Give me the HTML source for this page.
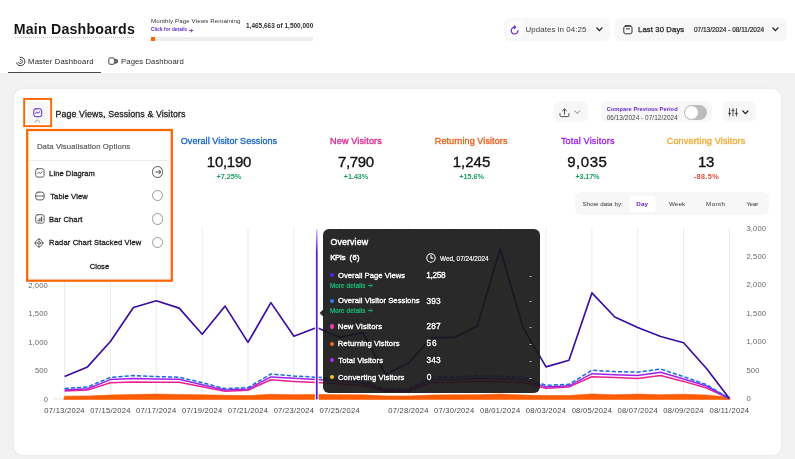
<!DOCTYPE html><html lang="en"><head><meta charset="utf-8"><title>Main Dashboards</title><style>
*{box-sizing:border-box;margin:0;padding:0}
html,body{width:795px;height:459px;overflow:hidden;background:#f2f2f2;font-family:"Liberation Sans", sans-serif;}
.a{position:absolute}
.t{position:absolute;white-space:nowrap;line-height:20px;height:20px}
.pill{position:absolute;background:#f7f7f7;border-radius:6px}
svg{position:absolute;overflow:visible}
#root{position:absolute;left:0;top:0;width:795px;height:459px;will-change:transform}
</style></head><body><div id="root">
<div class="a" style="left:0;top:0;width:795px;height:73px;background:#fff"></div>
<div class="a" style="left:14.7px;top:37.2px;width:119.5px;height:0;border-top:1px dotted #c4c4c4"></div>
<div class="a" style="left:151.4px;top:37.2px;width:161.6px;height:3.8px;background:#eee"></div>
<div class="a" style="left:151.4px;top:37.2px;width:3.8px;height:3.8px;background:#ff6600"></div>
<div class="a" style="left:8px;top:71.6px;width:92.6px;height:1.2px;background:#4a4a4a"></div>
<svg style="left:15px;top:56px" width="11" height="11" viewBox="0 0 11 11" fill="none" stroke="#2a2a2a" stroke-width="0.95" stroke-linecap="round"><path d="M5.0 1.3 A4.2 4.2 0 1 1 1.6 6.9"/><path d="M5.4 3.4 A2.1 2.1 0 1 1 3.6 6.6"/><circle cx="5.5" cy="5.5" r="0.45" fill="#2a2a2a" stroke="none"/></svg>
<svg style="left:108px;top:57.4px" width="11" height="9" viewBox="0 0 11 9" fill="none" stroke="#3a3a3a" stroke-width="0.95" stroke-linejoin="round"><rect x="0.8" y="0.9" width="5.6" height="6.4" rx="1.3"/><path d="M6.6 2.4 H8.4 Q9.4 2.4 9.4 3.3 V5.1 Q9.4 6 8.4 6 H6.6" fill="#777"/></svg>
<div class="pill" style="left:503.8px;top:18px;width:106.4px;height:22.8px"></div>
<div class="a" style="left:506.8px;top:20.6px;width:16px;height:17.6px;background:#fcfcfc;border-radius:4px"></div>
<svg style="left:510.4px;top:24.6px" width="10" height="11" viewBox="0 0 10 11" fill="none" stroke="#5a1fd1" stroke-width="1.1" stroke-linecap="round" stroke-linejoin="round"><path d="M8.0 5.6 A3.4 3.4 0 1 1 5.1 2.2"/><path d="M4.2 0.9 L5.6 2.2 L4.2 3.5"/></svg>
<svg style="left:596px;top:26.6px" width="7" height="5" viewBox="0 0 7 5" fill="none" stroke="#1a1a1a" stroke-width="1.3" stroke-linecap="round" stroke-linejoin="round"><path d="M0.8 0.9 L3.4 3.6 L6 0.9"/></svg>
<div class="pill" style="left:615.2px;top:18px;width:171.6px;height:22.8px"></div>
<svg style="left:623px;top:25.4px" width="10" height="10" viewBox="0 0 10 10" fill="none" stroke="#333" stroke-width="1" stroke-linecap="round"><rect x="0.8" y="1" width="8.2" height="7.8" rx="1.8"/><path d="M3.3 3.9 H6.5"/><path d="M2.6 0.9 H7.2" stroke-width="1.4"/></svg>
<svg style="left:772px;top:27px" width="7" height="5" viewBox="0 0 7 5" fill="none" stroke="#1a1a1a" stroke-width="1.3" stroke-linecap="round" stroke-linejoin="round"><path d="M0.8 0.9 L3.4 3.6 L6 0.9"/></svg>
<div class="a" style="left:14px;top:88.5px;width:767px;height:366.5px;background:#fff;border-radius:9px;box-shadow:0 0 4px rgba(0,0,0,0.05)"></div>
<div class="a" style="left:55.5px;top:117.4px;width:129.5px;height:0;border-top:1px dotted #bdbdbd"></div>
<div class="pill" style="left:553.5px;top:101.4px;width:34px;height:21px"></div>
<svg style="left:558.6px;top:108px" width="11" height="10" viewBox="0 0 11 10" fill="none" stroke="#4a4a4a" stroke-width="1" stroke-linecap="round" stroke-linejoin="round"><path d="M1 5.6 V7.4 Q1 8.6 2.2 8.6 H8.8 Q10 8.6 10 7.4 V5.6"/><path d="M5.5 6.2 V1"/><path d="M3.4 2.9 L5.5 0.9 L7.6 2.9"/></svg>
<svg style="left:574px;top:110.2px" width="7" height="5" viewBox="0 0 7 5" fill="none" stroke="#777" stroke-width="0.9" stroke-linecap="round" stroke-linejoin="round"><path d="M0.6 0.8 L3.3 3.5 L6 0.8"/></svg>
<div class="pill" style="left:601px;top:101.4px;width:111px;height:21px"></div>
<div class="a" style="left:684px;top:105px;width:23.4px;height:15px;border-radius:7.5px;background:#bcbcbc"></div>
<div class="a" style="left:685px;top:106px;width:13px;height:13px;border-radius:50%;background:#fff"></div>
<div class="pill" style="left:722.8px;top:101.4px;width:32.8px;height:21px"></div>
<svg style="left:727.6px;top:108px" width="10" height="9" viewBox="0 0 10 9" fill="none" stroke="#2a2a2a" stroke-width="0.85" stroke-linecap="round"><path d="M1.6 0.6 V8"/><path d="M5 0.6 V8"/><path d="M8.4 0.6 V8"/><path d="M0.5 5.4 H2.7"/><path d="M3.9 2.6 H6.1"/><path d="M7.3 5.4 H9.5"/></svg>
<svg style="left:742.3px;top:109.8px" width="7" height="5" viewBox="0 0 7 5" fill="none" stroke="#1a1a1a" stroke-width="1.3" stroke-linecap="round" stroke-linejoin="round"><path d="M0.8 0.9 L3.4 3.6 L6 0.9"/></svg>
<div class="pill" style="left:575.3px;top:192.4px;width:194.1px;height:23px;border-radius:7px"></div>
<div class="a" style="left:628.6px;top:195.6px;width:27.2px;height:16.6px;background:#fff;border-radius:5px"></div>
<svg style="left:0;top:0" width="795" height="459" viewBox="0 0 795 459" fill="none">
<line x1="64.6" y1="228" x2="64.6" y2="400" stroke="#ebebeb" stroke-width="1"/>
<line x1="110.4" y1="228" x2="110.4" y2="400" stroke="#ebebeb" stroke-width="1"/>
<line x1="156.3" y1="228" x2="156.3" y2="400" stroke="#ebebeb" stroke-width="1"/>
<line x1="202.2" y1="228" x2="202.2" y2="400" stroke="#ebebeb" stroke-width="1"/>
<line x1="248.0" y1="228" x2="248.0" y2="400" stroke="#ebebeb" stroke-width="1"/>
<line x1="293.9" y1="228" x2="293.9" y2="400" stroke="#ebebeb" stroke-width="1"/>
<line x1="339.7" y1="228" x2="339.7" y2="400" stroke="#ebebeb" stroke-width="1"/>
<line x1="408.5" y1="228" x2="408.5" y2="400" stroke="#ebebeb" stroke-width="1"/>
<line x1="454.3" y1="228" x2="454.3" y2="400" stroke="#ebebeb" stroke-width="1"/>
<line x1="500.2" y1="228" x2="500.2" y2="400" stroke="#ebebeb" stroke-width="1"/>
<line x1="546.0" y1="228" x2="546.0" y2="400" stroke="#ebebeb" stroke-width="1"/>
<line x1="591.9" y1="228" x2="591.9" y2="400" stroke="#ebebeb" stroke-width="1"/>
<line x1="637.7" y1="228" x2="637.7" y2="400" stroke="#ebebeb" stroke-width="1"/>
<line x1="683.6" y1="228" x2="683.6" y2="400" stroke="#ebebeb" stroke-width="1"/>
<line x1="729.4" y1="228" x2="729.4" y2="400" stroke="#ebebeb" stroke-width="1"/>
<line x1="385.5" y1="228" x2="385.5" y2="400" stroke="#ebebeb" stroke-width="1"/>
<line x1="53" y1="399" x2="729.4" y2="399" stroke="#e4e4e4" stroke-width="1"/>
<polygon points="63.8,399.4 64.6,396.18 87.5,396.01 110.4,395.04 133.4,394.48 156.3,394.08 179.2,394.48 202.2,394.87 225.1,395.33 248.0,395.61 270.9,394.31 293.9,394.65 316.8,394.42 339.7,394.76 362.6,394.87 385.5,395.90 408.5,395.90 431.4,395.04 454.3,394.87 477.2,394.76 500.2,394.08 523.1,395.04 546.0,395.61 569.0,395.44 591.9,393.91 614.8,394.76 637.7,394.08 660.7,394.65 683.6,394.19 706.5,395.04 729.4,397.26 730.2,399.4" fill="#fd5c02" stroke="#fd5c02" stroke-width="0.6" stroke-linejoin="round"/>
<polyline points="64.6,390.9 87.5,390.1 110.4,382.7 133.4,381.9 156.3,382.2 179.2,382.3 202.2,386.8 225.1,391.3 248.0,390.2 270.9,379.7 293.9,381.4 316.8,382.6 339.7,383.8 362.6,385.6 385.5,391.4 408.5,391.4 431.4,382.4 454.3,382.2 477.2,381.2 500.2,381.6 523.1,382.4 546.0,388.2 569.0,386.9 591.9,376.7 614.8,377.6 637.7,378.6 660.7,375.6 683.6,381.4 706.5,388.0 729.4,398.5" stroke="#ec1f8f" stroke-width="1.5" stroke-linejoin="round"/>
<polyline points="64.6,389.9 87.5,388.8 110.4,379.6 133.4,378.4 156.3,378.9 179.2,379.3 202.2,384.8 225.1,390.0 248.0,389.0 270.9,376.9 293.9,378.2 316.8,379.4 339.7,380.8 362.6,383.0 385.5,390.2 408.5,390.2 431.4,379.6 454.3,379.4 477.2,378.2 500.2,378.8 523.1,379.6 546.0,386.9 569.0,385.8 591.9,373.7 614.8,374.8 637.7,375.6 660.7,372.2 683.6,379.0 706.5,386.0 729.4,398.5" stroke="#a020f0" stroke-width="1.5" stroke-linejoin="round"/>
<polyline points="64.6,388.5 87.5,387.0 110.4,377.4 133.4,375.6 156.3,376.6 179.2,377.2 202.2,382.7 225.1,388.6 248.0,387.6 270.9,374.0 293.9,376.0 316.8,377.2 339.7,378.6 362.6,381.0 385.5,388.8 408.5,388.8 431.4,377.2 454.3,377.0 477.2,375.6 500.2,376.2 523.1,377.2 546.0,385.4 569.0,384.3 591.9,370.3 614.8,371.6 637.7,372.2 660.7,369.0 683.6,376.7 706.5,384.6 729.4,398.5" stroke="#1a6ae0" stroke-width="1.5" stroke-dasharray="4.2 2" stroke-linejoin="round"/>
<polyline points="64.6,376.5 87.5,366.9 110.4,341.5 133.4,307.5 156.3,300.8 179.2,308.1 202.2,334.3 225.1,306.1 248.0,342.4 270.9,302.6 293.9,336.3 316.8,327.4 339.7,337.4 362.6,332.5 385.5,374.5 408.5,363.3 431.4,337.6 454.3,337.4 477.2,326.2 500.2,248.6 523.1,327.7 546.0,366.9 569.0,360.2 591.9,292.9 614.8,317.0 637.7,327.5 660.7,336.5 683.6,342.7 706.5,368.5 729.4,398.5" stroke="#3a0ca3" stroke-width="1.65" stroke-linejoin="round"/>
<defs><linearGradient id="hg" gradientUnits="userSpaceOnUse" x1="0" y1="229" x2="0" y2="252"><stop offset="0" stop-color="#6a1fe0" stop-opacity="0.25"/><stop offset="1" stop-color="#5a14d8" stop-opacity="1"/></linearGradient><linearGradient id="hw" gradientUnits="userSpaceOnUse" x1="0" y1="229" x2="0" y2="252"><stop offset="0" stop-color="#fff" stop-opacity="0.2"/><stop offset="1" stop-color="#fff" stop-opacity="1"/></linearGradient></defs>
<rect x="314.9" y="229" width="3.8" height="171" fill="url(#hw)"/>
<rect x="315.92" y="229.4" width="1.7" height="170" fill="url(#hg)"/>
</svg>
<div class="a" style="left:322.6px;top:228.6px;width:217.2px;height:164.2px;background:rgba(23,23,23,0.92);border-radius:6px"></div>
<svg style="left:318.6px;top:309px" width="5" height="8" viewBox="0 0 5 8"><path d="M4.2 0.4 L0.6 4 L4.2 7.6 Z" fill="rgba(23,23,23,0.92)"/></svg>
<svg style="left:426px;top:252.9px" width="10" height="10" viewBox="0 0 10 10" fill="none" stroke="#fff" stroke-width="1.05" stroke-linecap="round" stroke-linejoin="round"><circle cx="5" cy="5" r="4.2"/><path d="M5 2.6 V5.1 H6.9"/></svg>
<div class="a" style="left:330.3px;top:273.1px;width:4.2px;height:4.2px;border-radius:50%;background:#5b21e0"></div>
<div class="a" style="left:330.3px;top:298.9px;width:4.2px;height:4.2px;border-radius:50%;background:#2f7df0"></div>
<div class="a" style="left:330.3px;top:324.4px;width:4.2px;height:4.2px;border-radius:50%;background:#f03aa8"></div>
<div class="a" style="left:330.3px;top:341.6px;width:4.2px;height:4.2px;border-radius:50%;background:#f4701c"></div>
<div class="a" style="left:330.3px;top:358.1px;width:4.2px;height:4.2px;border-radius:50%;background:#b026f5"></div>
<div class="a" style="left:330.3px;top:375.3px;width:4.2px;height:4.2px;border-radius:50%;background:#f8c533"></div>
<div class="a" style="left:27.6px;top:102px;width:21.6px;height:22px;background:#f7f7f7;border-radius:4px"></div>
<svg style="left:33px;top:108px" width="10" height="10" viewBox="0 0 10 10" fill="none" stroke="#5a1fd1" stroke-width="1.0" stroke-linecap="round" stroke-linejoin="round"><rect x="0.8" y="0.8" width="7.9" height="7.9" rx="2"/><path d="M2.5 5.3 L3.7 4.2 L5.1 5.2 L7.0 3.5"/></svg>
<svg style="left:34.4px;top:118.8px" width="7" height="4" viewBox="0 0 7 4" fill="none" stroke="#8a8a8a" stroke-width="0.8" stroke-linecap="round" stroke-linejoin="round"><path d="M0.6 3.2 L3.3 0.7 L6 3.2"/></svg>
<svg style="left:0;top:0" width="200" height="300" viewBox="0 0 200 300" fill="none" stroke="#ff6600"><rect x="24.15" y="98.95" width="27.0" height="27.2" stroke-width="1.9"/></svg>
<svg style="left:0;top:0" width="200" height="300" viewBox="0 0 200 300" fill="#fff" stroke="#ff6600"><rect x="27.2" y="130.0" width="144.6" height="150.7" stroke-width="2.25"/></svg>
<div class="a" style="left:29px;top:159.6px;width:140px;height:1px;background:#ececec"></div>
<svg style="left:34.6px;top:167.6px" width="10" height="10" viewBox="0 0 10 10" fill="none" stroke="#444" stroke-width="0.85" stroke-linecap="round" stroke-linejoin="round"><rect x="0.7" y="0.7" width="8.4" height="8.4" rx="1.9"/><path d="M2.6 5.5 L3.8 4.4 L5.3 5.4 L7.2 3.7"/></svg>
<svg style="left:34.6px;top:190.8px" width="10" height="10" viewBox="0 0 10 10" fill="none" stroke="#444" stroke-width="0.85" stroke-linecap="round" stroke-linejoin="round"><rect x="0.7" y="1.1" width="8.4" height="7.8" rx="2.6"/><path d="M0.8 5 H9"/></svg>
<svg style="left:34.6px;top:214.4px" width="10" height="10" viewBox="0 0 10 10" fill="none" stroke="#444" stroke-width="0.85" stroke-linecap="round" stroke-linejoin="round"><rect x="0.7" y="0.7" width="8.4" height="8.4" rx="1.9"/><path d="M3.2 6.9 V6.0 M4.9 6.9 V4.6 M6.6 6.9 V3.0" stroke-width="1.1"/></svg>
<svg style="left:34.4px;top:237.6px" width="10" height="10" viewBox="0 0 10 10" fill="none" stroke="#444" stroke-width="0.85" stroke-linecap="round" stroke-linejoin="round"><circle cx="5" cy="5" r="3.5" stroke-dasharray="1.6 0.9"/><circle cx="5" cy="5" r="1.4"/><path d="M5 0.4 V2.2 M5 7.8 V9.6 M0.4 5 H2.2 M7.8 5 H9.6"/></svg>
<div class="a" style="left:152.2px;top:166.4px;width:11.2px;height:11.2px;border-radius:50%;border:1px solid #555"></div>
<div class="a" style="left:152.2px;top:190.0px;width:11.2px;height:11.2px;border-radius:50%;border:1px solid #9a9a9a"></div>
<div class="a" style="left:152.2px;top:213.4px;width:11.2px;height:11.2px;border-radius:50%;border:1px solid #9a9a9a"></div>
<div class="a" style="left:152.2px;top:236.7px;width:11.2px;height:11.2px;border-radius:50%;border:1px solid #9a9a9a"></div>
<svg style="left:154.6px;top:169px" width="7" height="6" viewBox="0 0 7 6" fill="none" stroke="#333" stroke-width="0.9" stroke-linecap="round" stroke-linejoin="round"><path d="M0.8 3 H5.6"/><path d="M3.9 1.2 L5.8 3 L3.9 4.8"/></svg>
<svg style="left:189.0px;top:27.5px" width="4.0" height="5" viewBox="0 0 4.0 5" fill="none" stroke="#5a1fd1" stroke-width="0.8" stroke-linecap="round" stroke-linejoin="round"><path d="M0.4 2.5 H3.5"/><path d="M2.0 0.9 L3.6 2.5 L2.0 4.1"/></svg>
<svg style="left:367.8px;top:283.0px" width="4.5" height="5" viewBox="0 0 4.5 5" fill="none" stroke="#19c37d" stroke-width="0.8" stroke-linecap="round" stroke-linejoin="round"><path d="M0.4 2.5 H4.0"/><path d="M2.5 0.9 L4.1 2.5 L2.5 4.1"/></svg>
<svg style="left:367.8px;top:308.4px" width="4.5" height="5" viewBox="0 0 4.5 5" fill="none" stroke="#19c37d" stroke-width="0.8" stroke-linecap="round" stroke-linejoin="round"><path d="M0.4 2.5 H4.0"/><path d="M2.5 0.9 L4.1 2.5 L2.5 4.1"/></svg>
<span class="t" style="left:13.70px;top:19.10px;font-size:14.18px;font-weight:700;color:#151515;letter-spacing:0.214px;">Main Dashboards</span>
<span class="t" style="left:150.90px;top:11.20px;font-size:6.19px;font-weight:400;color:#333;letter-spacing:0.087px;">Monthly Page Views Remaining</span>
<span class="t" style="left:151.05px;top:20.10px;font-size:4.74px;font-weight:700;color:#5a1fd1;letter-spacing:0.066px;">Click for details</span>
<span class="t" style="left:246.00px;top:15.90px;font-size:6.42px;font-weight:700;color:#2a2a2a;letter-spacing:0.031px;">1,465,663 of 1,500,000</span>
<span class="t" style="left:28.10px;top:51.50px;font-size:7.68px;font-weight:400;color:#1d1d1d;letter-spacing:0.147px;">Master Dashboard</span>
<span class="t" style="left:121.10px;top:51.50px;font-size:7.68px;font-weight:400;color:#2a2a2a;letter-spacing:0.082px;">Pages Dashboard</span>
<span class="t" style="left:525.50px;top:19.70px;font-size:7.92px;font-weight:400;color:#444;letter-spacing:0.067px;">Updates in 04:25</span>
<span class="t" style="left:638.10px;top:19.90px;font-size:7.71px;font-weight:400;color:#1a1a1a;letter-spacing:0.105px;-webkit-text-stroke:0.25px #1a1a1a;">Last 30 Days</span>
<span class="t" style="left:693.95px;top:20.00px;font-size:6.46px;font-weight:400;color:#2a2a2a;letter-spacing:0.014px;-webkit-text-stroke:0.2px #2a2a2a;">07/13/2024 - 08/11/2024</span>
<span class="t" style="left:55.50px;top:103.50px;font-size:8.84px;font-weight:400;color:#1d1d1d;letter-spacing:0.107px;-webkit-text-stroke:0.3px #1d1d1d;">Page Views, Sessions &amp; Visitors</span>
<span class="t" style="left:606.65px;top:98.60px;font-size:5.67px;font-weight:700;color:#5a1fd1;letter-spacing:0.082px;">Compare Previous Period</span>
<span class="t" style="left:606.65px;top:107.70px;font-size:6.48px;font-weight:400;color:#444;letter-spacing:0.027px;">06/13/2024 - 07/12/2024</span>
<span class="t" style="left:36.90px;top:136.70px;font-size:7.78px;font-weight:400;color:#555;letter-spacing:0.094px;-webkit-text-stroke:0.15px #555;">Data Visualisation Options</span>
<span class="t" style="left:49.10px;top:163.50px;font-size:7.58px;font-weight:400;color:#222;letter-spacing:0.068px;-webkit-text-stroke:0.3px #222;">Line Diagram</span>
<span class="t" style="left:50.20px;top:186.50px;font-size:7.58px;font-weight:400;color:#222;letter-spacing:0.117px;-webkit-text-stroke:0.3px #222;">Table View</span>
<span class="t" style="left:49.10px;top:210.10px;font-size:7.58px;font-weight:400;color:#222;letter-spacing:0.112px;-webkit-text-stroke:0.3px #222;">Bar Chart</span>
<span class="t" style="left:49.10px;top:233.10px;font-size:7.58px;font-weight:400;color:#222;letter-spacing:0.133px;-webkit-text-stroke:0.3px #222;">Radar Chart Stacked View</span>
<span class="t" style="left:89.75px;top:256.50px;font-size:7.58px;font-weight:400;color:#222;letter-spacing:0.000px;-webkit-text-stroke:0.3px #222;">Close</span>
<span class="t" style="left:180.75px;top:131.30px;font-size:9.05px;font-weight:400;color:#1763c6;letter-spacing:0.043px;-webkit-text-stroke:0.3px currentColor;">Overall Visitor Sessions</span>
<span class="t" style="left:206.80px;top:152.30px;font-size:15.00px;font-weight:400;color:#111;letter-spacing:-0.260px;-webkit-text-stroke:0.35px #111;">10,190</span>
<span class="t" style="left:216.55px;top:166.50px;font-size:7.26px;font-weight:700;color:#1a9e5c;letter-spacing:-0.010px;">+7.25%</span>
<span class="t" style="left:330.10px;top:131.30px;font-size:9.05px;font-weight:400;color:#e0218f;letter-spacing:0.145px;-webkit-text-stroke:0.3px currentColor;">New Visitors</span>
<span class="t" style="left:337.90px;top:152.30px;font-size:15.00px;font-weight:400;color:#111;letter-spacing:-0.350px;-webkit-text-stroke:0.35px #111;">7,790</span>
<span class="t" style="left:343.75px;top:166.50px;font-size:7.26px;font-weight:700;color:#1a9e5c;letter-spacing:-0.050px;">+1.43%</span>
<span class="t" style="left:434.80px;top:131.30px;font-size:9.05px;font-weight:400;color:#ec5a12;letter-spacing:0.082px;-webkit-text-stroke:0.3px currentColor;">Returning Visitors</span>
<span class="t" style="left:452.70px;top:152.30px;font-size:15.00px;font-weight:400;color:#111;letter-spacing:0.000px;-webkit-text-stroke:0.35px #111;">1,245</span>
<span class="t" style="left:459.25px;top:166.50px;font-size:7.26px;font-weight:700;color:#1a9e5c;letter-spacing:-0.030px;">+15.6%</span>
<span class="t" style="left:560.90px;top:131.30px;font-size:9.05px;font-weight:400;color:#9a1fe8;letter-spacing:0.185px;-webkit-text-stroke:0.3px currentColor;">Total Visitors</span>
<span class="t" style="left:567.20px;top:152.30px;font-size:15.00px;font-weight:400;color:#111;letter-spacing:0.550px;-webkit-text-stroke:0.35px #111;">9,035</span>
<span class="t" style="left:575.45px;top:166.50px;font-size:7.26px;font-weight:700;color:#1a9e5c;letter-spacing:-0.150px;">+3.17%</span>
<span class="t" style="left:666.75px;top:131.30px;font-size:9.05px;font-weight:400;color:#f5a72a;letter-spacing:0.153px;-webkit-text-stroke:0.3px currentColor;">Converting Visitors</span>
<span class="t" style="left:698.00px;top:152.30px;font-size:15.00px;font-weight:400;color:#111;letter-spacing:-0.450px;-webkit-text-stroke:0.35px #111;">13</span>
<span class="t" style="left:693.75px;top:166.50px;font-size:7.26px;font-weight:700;color:#e5483c;letter-spacing:0.400px;">-88.5%</span>
<span class="t" style="left:582.45px;top:194.30px;font-size:6.26px;font-weight:400;color:#333;letter-spacing:0.071px;">Show data by:</span>
<span class="t" style="left:636.30px;top:194.30px;font-size:6.26px;font-weight:700;color:#5a1fd1;letter-spacing:0.100px;">Day</span>
<span class="t" style="left:669.00px;top:194.30px;font-size:6.26px;font-weight:400;color:#333;letter-spacing:0.083px;">Week</span>
<span class="t" style="left:706.10px;top:194.30px;font-size:6.26px;font-weight:400;color:#333;letter-spacing:0.350px;">Month</span>
<span class="t" style="left:746.15px;top:194.30px;font-size:6.26px;font-weight:400;color:#333;letter-spacing:-0.117px;">Year</span>
<span class="t" style="left:330.45px;top:232.20px;font-size:8.82px;font-weight:400;color:#fff;letter-spacing:0.136px;-webkit-text-stroke:0.4px #fff;">Overview</span>
<span class="t" style="left:330.20px;top:248.10px;font-size:7.60px;font-weight:400;color:#fff;letter-spacing:-0.267px;-webkit-text-stroke:0.4px #fff;">KPIs</span>
<span class="t" style="left:349.55px;top:248.10px;font-size:7.60px;font-weight:400;color:#fff;letter-spacing:0.325px;-webkit-text-stroke:0.4px #fff;">(6)</span>
<span class="t" style="left:440.00px;top:248.50px;font-size:6.35px;font-weight:400;color:#fff;letter-spacing:0.025px;-webkit-text-stroke:0.15px #fff;">Wed, 07/24/2024</span>
<span class="t" style="left:337.95px;top:265.50px;font-size:7.67px;font-weight:400;color:#fff;letter-spacing:0.032px;-webkit-text-stroke:0.35px #fff;text-shadow:0 0 1.5px #000;">Overall Page Views</span>
<span class="t" style="left:426.30px;top:264.90px;font-size:8.30px;font-weight:400;color:#fff;letter-spacing:-0.350px;-webkit-text-stroke:0.35px #fff;text-shadow:0 0 1.5px #000;">1,258</span>
<span class="t" style="left:529.15px;top:265.50px;font-size:7.90px;font-weight:400;color:#fff;letter-spacing:0.000px;">-</span>
<span class="t" style="left:337.95px;top:291.30px;font-size:7.67px;font-weight:400;color:#fff;letter-spacing:0.039px;-webkit-text-stroke:0.35px #fff;text-shadow:0 0 1.5px #000;">Overall Visitor Sessions</span>
<span class="t" style="left:426.55px;top:290.70px;font-size:8.30px;font-weight:400;color:#fff;letter-spacing:0.100px;-webkit-text-stroke:0.35px #fff;text-shadow:0 0 1.5px #000;">393</span>
<span class="t" style="left:529.15px;top:291.30px;font-size:7.90px;font-weight:400;color:#fff;letter-spacing:0.000px;">-</span>
<span class="t" style="left:337.70px;top:316.80px;font-size:7.67px;font-weight:400;color:#fff;letter-spacing:0.186px;-webkit-text-stroke:0.35px #fff;text-shadow:0 0 1.5px #000;">New Visitors</span>
<span class="t" style="left:426.55px;top:316.20px;font-size:8.30px;font-weight:400;color:#fff;letter-spacing:0.100px;-webkit-text-stroke:0.35px #fff;text-shadow:0 0 1.5px #000;">287</span>
<span class="t" style="left:529.15px;top:316.80px;font-size:7.90px;font-weight:400;color:#fff;letter-spacing:0.000px;">-</span>
<span class="t" style="left:337.70px;top:334.00px;font-size:7.67px;font-weight:400;color:#fff;letter-spacing:0.097px;-webkit-text-stroke:0.35px #fff;text-shadow:0 0 1.5px #000;">Returning Visitors</span>
<span class="t" style="left:426.55px;top:333.40px;font-size:8.30px;font-weight:400;color:#fff;letter-spacing:0.850px;-webkit-text-stroke:0.35px #fff;text-shadow:0 0 1.5px #000;">56</span>
<span class="t" style="left:529.15px;top:334.00px;font-size:7.90px;font-weight:400;color:#fff;letter-spacing:0.000px;">-</span>
<span class="t" style="left:338.20px;top:350.50px;font-size:7.67px;font-weight:400;color:#fff;letter-spacing:0.119px;-webkit-text-stroke:0.35px #fff;text-shadow:0 0 1.5px #000;">Total Visitors</span>
<span class="t" style="left:426.55px;top:349.90px;font-size:8.30px;font-weight:400;color:#fff;letter-spacing:0.100px;-webkit-text-stroke:0.35px #fff;text-shadow:0 0 1.5px #000;">343</span>
<span class="t" style="left:529.15px;top:350.50px;font-size:7.90px;font-weight:400;color:#fff;letter-spacing:0.000px;">-</span>
<span class="t" style="left:337.95px;top:367.70px;font-size:7.67px;font-weight:400;color:#fff;letter-spacing:0.131px;-webkit-text-stroke:0.35px #fff;text-shadow:0 0 1.5px #000;">Converting Visitors</span>
<span class="t" style="left:426.80px;top:367.10px;font-size:8.30px;font-weight:400;color:#fff;letter-spacing:0.000px;-webkit-text-stroke:0.35px #fff;text-shadow:0 0 1.5px #000;">0</span>
<span class="t" style="left:529.15px;top:367.70px;font-size:7.90px;font-weight:400;color:#fff;letter-spacing:0.000px;">-</span>
<span class="t" style="left:329.90px;top:275.60px;font-size:6.38px;font-weight:400;color:#19c37d;letter-spacing:0.082px;-webkit-text-stroke:0.2px #19c37d;">More details</span>
<span class="t" style="left:329.90px;top:301.00px;font-size:6.38px;font-weight:400;color:#19c37d;letter-spacing:0.082px;-webkit-text-stroke:0.2px #19c37d;">More details</span>
<span class="t" style="left:746.4px;top:218.5px;font-size:7.6px;color:#666;letter-spacing:0.15px">3,000</span>
<span class="t" style="left:746.4px;top:247.0px;font-size:7.6px;color:#666;letter-spacing:0.15px">2,500</span>
<span class="t" style="left:746.4px;top:275.4px;font-size:7.6px;color:#666;letter-spacing:0.15px">2,000</span>
<span class="t" style="left:8px;width:40px;text-align:right;top:275.7px;font-size:7.6px;color:#666;letter-spacing:0.15px">2,000</span>
<span class="t" style="left:746.4px;top:303.8px;font-size:7.6px;color:#666;letter-spacing:0.15px">1,500</span>
<span class="t" style="left:8px;width:40px;text-align:right;top:304.1px;font-size:7.6px;color:#666;letter-spacing:0.15px">1,500</span>
<span class="t" style="left:746.4px;top:332.2px;font-size:7.6px;color:#666;letter-spacing:0.15px">1,000</span>
<span class="t" style="left:8px;width:40px;text-align:right;top:332.5px;font-size:7.6px;color:#666;letter-spacing:0.15px">1,000</span>
<span class="t" style="left:746.4px;top:360.6px;font-size:7.6px;color:#666;letter-spacing:0.15px">500</span>
<span class="t" style="left:8px;width:40px;text-align:right;top:360.9px;font-size:7.6px;color:#666;letter-spacing:0.15px">500</span>
<span class="t" style="left:746.4px;top:389.2px;font-size:7.6px;color:#666;letter-spacing:0.15px">0</span>
<span class="t" style="left:8px;width:40px;text-align:right;top:389.5px;font-size:7.6px;color:#666;letter-spacing:0.15px">0</span>
<span class="t" style="left:34.6px;width:60px;text-align:center;top:401.0px;font-size:7.6px;color:#444;letter-spacing:0.25px">07/13/2024</span>
<span class="t" style="left:80.4px;width:60px;text-align:center;top:401.0px;font-size:7.6px;color:#444;letter-spacing:0.25px">07/15/2024</span>
<span class="t" style="left:126.3px;width:60px;text-align:center;top:401.0px;font-size:7.6px;color:#444;letter-spacing:0.25px">07/17/2024</span>
<span class="t" style="left:172.2px;width:60px;text-align:center;top:401.0px;font-size:7.6px;color:#444;letter-spacing:0.25px">07/19/2024</span>
<span class="t" style="left:218.0px;width:60px;text-align:center;top:401.0px;font-size:7.6px;color:#444;letter-spacing:0.25px">07/21/2024</span>
<span class="t" style="left:263.9px;width:60px;text-align:center;top:401.0px;font-size:7.6px;color:#444;letter-spacing:0.25px">07/23/2024</span>
<span class="t" style="left:309.7px;width:60px;text-align:center;top:401.0px;font-size:7.6px;color:#444;letter-spacing:0.25px">07/25/2024</span>
<span class="t" style="left:378.5px;width:60px;text-align:center;top:401.0px;font-size:7.6px;color:#444;letter-spacing:0.25px">07/28/2024</span>
<span class="t" style="left:424.3px;width:60px;text-align:center;top:401.0px;font-size:7.6px;color:#444;letter-spacing:0.25px">07/30/2024</span>
<span class="t" style="left:470.2px;width:60px;text-align:center;top:401.0px;font-size:7.6px;color:#444;letter-spacing:0.25px">08/01/2024</span>
<span class="t" style="left:516.0px;width:60px;text-align:center;top:401.0px;font-size:7.6px;color:#444;letter-spacing:0.25px">08/03/2024</span>
<span class="t" style="left:561.9px;width:60px;text-align:center;top:401.0px;font-size:7.6px;color:#444;letter-spacing:0.25px">08/05/2024</span>
<span class="t" style="left:607.7px;width:60px;text-align:center;top:401.0px;font-size:7.6px;color:#444;letter-spacing:0.25px">08/07/2024</span>
<span class="t" style="left:653.6px;width:60px;text-align:center;top:401.0px;font-size:7.6px;color:#444;letter-spacing:0.25px">08/09/2024</span>
<span class="t" style="left:699.4px;width:60px;text-align:center;top:401.0px;font-size:7.6px;color:#444;letter-spacing:0.25px">08/11/2024</span>
</div></body></html>
